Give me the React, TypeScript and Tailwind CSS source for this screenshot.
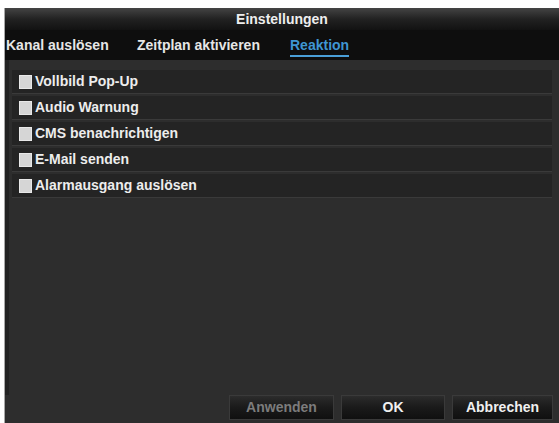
import { useState } from 'react';

const options = [
    'Vollbild Pop-Up',
    'Audio Warnung',
    'CMS benachrichtigen',
    'E-Mail senden',
    'Alarmausgang auslösen'
];

const Checkbox = ({ checked, onClick }: { checked: boolean; onClick: () => void }) => (
    <button
        onClick={onClick}
        className="w-[13px] h-[14px] bg-[#d6d6d6] border border-[#e8e8e8] flex items-center justify-center shrink-0"
    >
        {checked && <span className="w-[7px] h-[7px] bg-[#333]"></span>}
    </button>
);

const FooterButton = ({ label, width, disabled = false }: { label: string; width: string; disabled?: boolean }) => (
    <button
        className={`${width} h-[25px] bg-gradient-to-b from-[#2c2c2c] via-[#1a1a1a] to-[#101010] border border-[#3a3a3a] text-[14px] font-bold ${
            disabled ? 'text-[#7c7c7c]' : 'text-[#f0f0f0]'
        }`}
    >
        {label}
    </button>
);

export default function App() {
    const [checked, setChecked] = useState<boolean[]>(options.map(() => false));

    const toggle = (i: number) => setChecked(prev => prev.map((c, j) => (j === i ? !c : c)));

    return (
        <div className="w-[559px] h-[423px] bg-white pt-2 pl-1 font-['Liberation_Sans',Arial,sans-serif]">
            <div className="h-full bg-[#2d2d2d] border-l border-[#a8a8a8] flex flex-col">
                {/* title bar */}
                <div className="h-[22px] bg-gradient-to-b from-[#444] via-[#222] to-[#121212] flex items-center justify-center text-[14px] text-[#eeeeee] font-bold">
                    Einstellungen
                </div>

                {/* tabs */}
                <div className="h-[30px] bg-[#0e0e0e] flex items-center pl-[1px] text-[14px] font-bold">
                    <span className="w-[131px] text-[#e6e6e6]">Kanal auslösen</span>
                    <span className="w-[153px] text-[#e6e6e6]">Zeitplan aktivieren</span>
                    <span className="text-[#3f96d2] border-b-2 border-[#4a9fd8] leading-[15px] mt-[5px] pb-[2px]">Reaktion</span>
                </div>

                {/* options */}
                <div className="flex-1 pt-[10px] pl-[3px] pr-[7px] flex flex-col gap-[2px] border-l-4 border-[#222]">
                    {options.map((o, i) => (
                        <div
                            key={o}
                            className="h-[24px] bg-[#242424] border-b border-[#3a3a3a] flex items-center gap-[3px] pl-[7px] text-[14px] font-bold text-[#ededed]"
                        >
                            <Checkbox checked={checked[i]} onClick={() => toggle(i)} />
                            <span>{o}</span>
                        </div>
                    ))}
                </div>

                {/* footer */}
                <div className="h-[28px] flex justify-end items-start gap-[7px] pr-[6px]">
                    <FooterButton label="Anwenden" width="w-[105px]" disabled />
                    <FooterButton label="OK" width="w-[104px]" />
                    <FooterButton label="Abbrechen" width="w-[101px]" />
                </div>
            </div>
        </div>
    );
}
